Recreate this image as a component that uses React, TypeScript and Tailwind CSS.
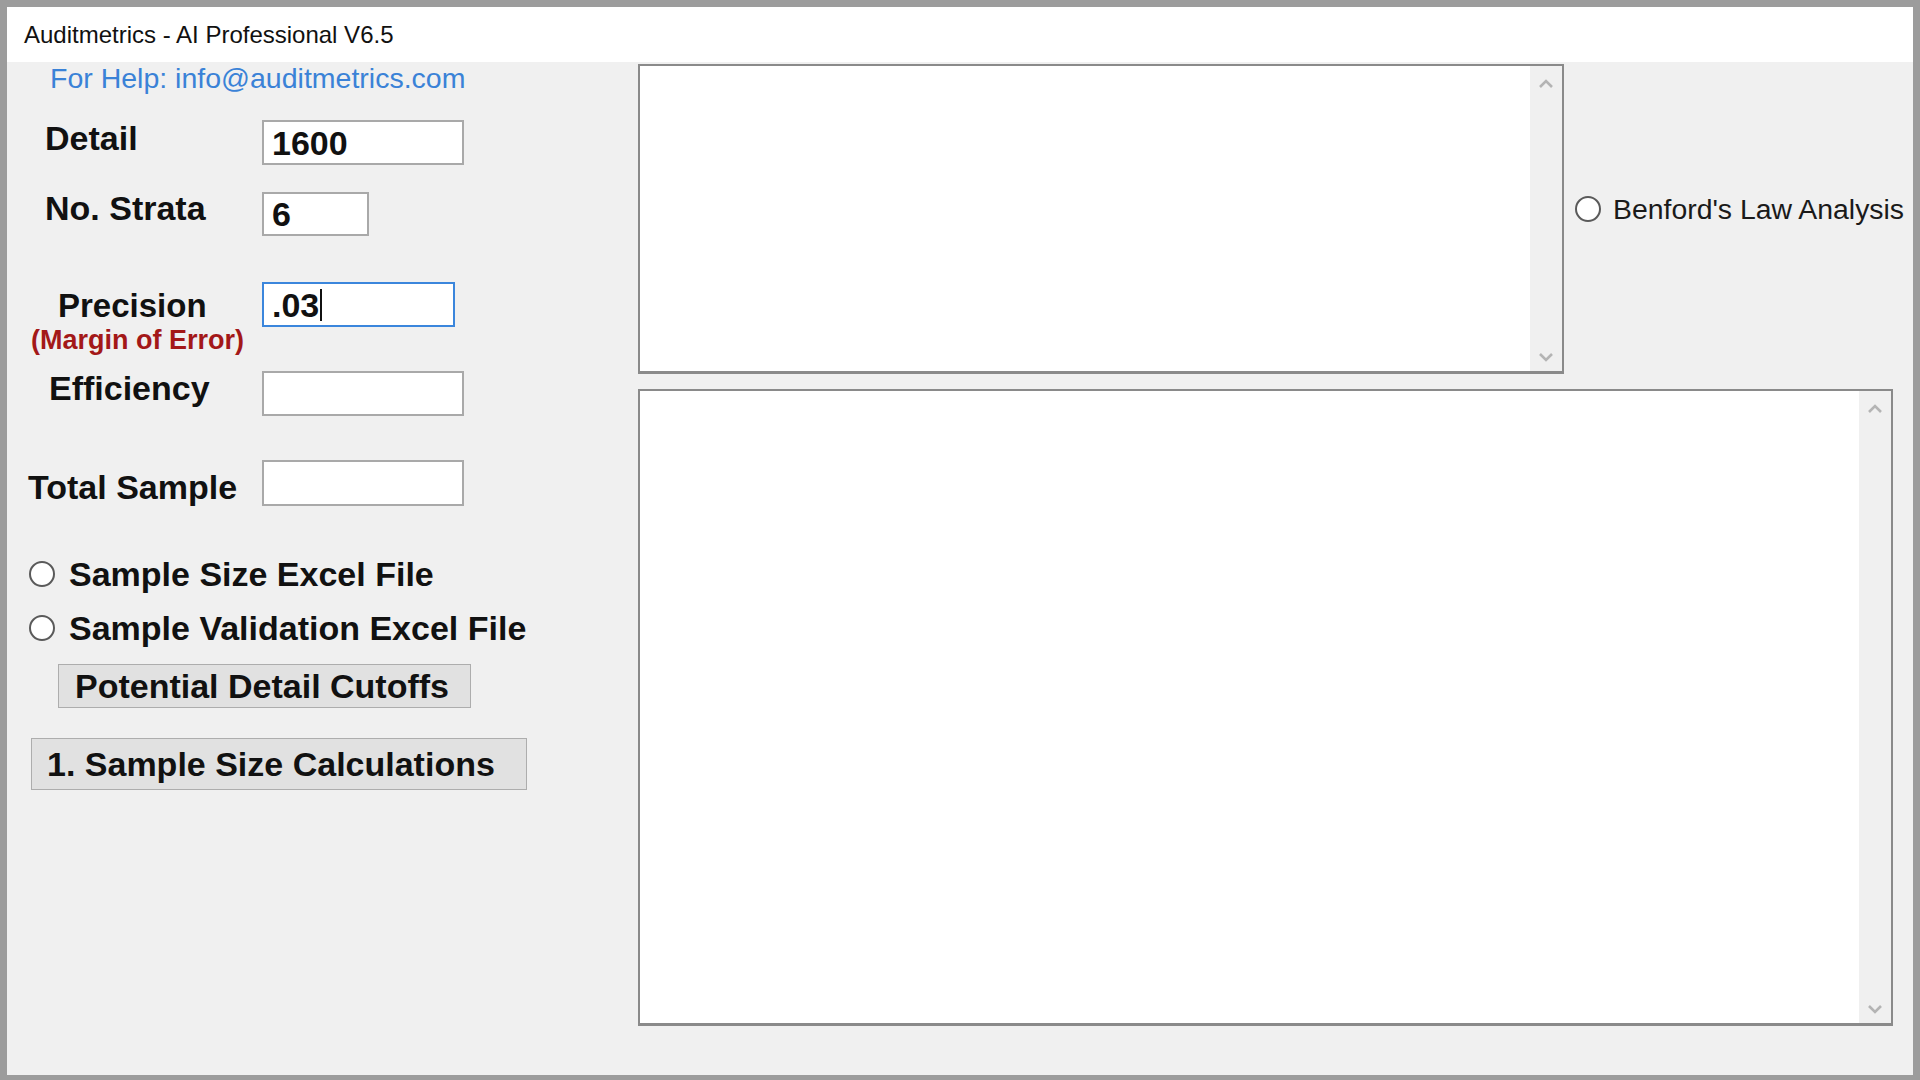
const font = "font-['Liberation_Sans',Arial,sans-serif]";

const Radio = ({ label }: { label: string }) => (
  <div className="flex items-center gap-[14px]">
    <span className="w-[26px] h-[26px] rounded-full bg-white border-2 border-[#5a5a5a] shrink-0" />
    <span className="text-[34px] leading-[40px] text-[#111] font-bold">{label}</span>
  </div>
);

const Field = ({ value, w, focused = false, h = 'h-[45px]' }: { value?: string; w: string; focused?: boolean; h?: string }) => (
  <div
    className={`${w} ${h} bg-white border-2 ${focused ? 'border-[#3b86dc]' : 'border-[#a9a9a9]'} flex items-center pl-[8px] text-[34px] font-bold text-[#111] leading-none`}
  >
    {value}
    {focused && <span className="w-[2px] h-[32px] bg-[#111] ml-[1px]" />}
  </div>
);

const Chevron = ({ down = false }: { down?: boolean }) => (
  <svg width="18" height="10" viewBox="0 0 18 10">
    <polyline
      points={down ? '3,2 9,8 15,2' : '3,8 9,2 15,8'}
      fill="none"
      stroke="#b4b4b4"
      strokeWidth="2.6"
    />
  </svg>
);

const ScrollBox = ({ w, h }: { w: string; h: string }) => (
  <div className={`${w} ${h} bg-white border-2 border-[#8a8a8a] border-b-[3px] flex`}>
    <div className="flex-1" />
    <div className="w-[32px] bg-[#f0f0f0] flex flex-col items-center justify-between pt-[13px] pb-[9px]">
      <Chevron />
      <Chevron down />
    </div>
  </div>
);

export default function App() {
  return (
    <div
      className={`${font} w-[1920px] h-[1080px] bg-[#f0f0f0] border-t-[7px] border-x-[7px] border-b-[5px] border-[#9c9c9c] flex flex-col overflow-hidden`}
    >
      {/* Title bar */}
      <div className="h-[55px] bg-white flex items-center pl-[17px] text-[24px] text-[#111] shrink-0">
        Auditmetrics - AI Professional V6.5
      </div>

      <div className="flex-1 flex">
        {/* Left form */}
        <div className="w-[631px] shrink-0 flex flex-col">
          <div className="h-[33px] pl-[43px] text-[28.5px] leading-[33px] text-[#3a82d7]">
            For Help: info@auditmetrics.com
          </div>

          <div className="mt-[25px] h-[45px] flex items-center">
            <div className="w-[255px] pl-[38px] mb-[10px] text-[34px] leading-[40px] font-bold text-[#111]">Detail</div>
            <Field value="1600" w="w-[202px]" />
          </div>

          <div className="mt-[27px] h-[44px] flex items-center">
            <div className="w-[255px] pl-[38px] mb-[12px] text-[34px] leading-[40px] font-bold text-[#111]">No. Strata</div>
            <Field value="6" w="w-[107px]" h="h-[44px]" />
          </div>

          <div className="mt-[46px] flex items-start">
            <div className="w-[255px] flex flex-col">
              <div className="pl-[51px] mt-[4px] text-[33px] leading-[40px] font-bold text-[#111]">Precision</div>
              <div className="pl-[24px] text-[27px] leading-[28px] font-bold text-[#a31818]">(Margin of Error)</div>
            </div>
            <Field value=".03" w="w-[193px]" focused />
          </div>

          <div className="mt-[17px] h-[45px] flex items-center">
            <div className="w-[255px] pl-[42px] mb-[11px] text-[34px] leading-[40px] font-bold text-[#111]">Efficiency</div>
            <Field w="w-[202px]" />
          </div>

          <div className="mt-[44px] h-[46px] flex items-center">
            <div className="w-[255px] pl-[21px] mt-[8px] text-[34px] leading-[40px] font-bold text-[#111]">Total Sample</div>
            <Field w="w-[202px]" h="h-[46px]" />
          </div>

          <div className="mt-[48px] pl-[22px]">
            <Radio label="Sample Size Excel File" />
          </div>
          <div className="mt-[14px] pl-[22px]">
            <Radio label="Sample Validation Excel File" />
          </div>

          <button className="mt-[16px] ml-[51px] w-[413px] h-[44px] bg-[#e1e1e1] border border-[#adadad] text-left pl-[16px] text-[34px] leading-none font-bold text-[#111]">
            Potential Detail Cutoffs
          </button>
          <button className="mt-[30px] ml-[24px] w-[496px] h-[52px] bg-[#e1e1e1] border border-[#adadad] text-left pl-[15px] text-[34px] leading-none font-bold text-[#111]">
            1. Sample Size Calculations
          </button>
        </div>

        {/* Right output area */}
        <div className="flex flex-col pt-[2px]">
          <div className="flex items-start">
            <ScrollBox w="w-[926px]" h="h-[310px]" />
            <div className="ml-[11px] mt-[125px]">
              <div className="flex items-center gap-[12px]">
                <span className="w-[26px] h-[26px] rounded-full bg-white border-2 border-[#5a5a5a] shrink-0" />
                <span className="text-[28.4px] leading-[40px] text-[#1a1a1a] whitespace-nowrap">Benford's Law Analysis</span>
              </div>
            </div>
          </div>
          <div className="mt-[15px]">
            <ScrollBox w="w-[1255px]" h="h-[637px]" />
          </div>
        </div>
      </div>
    </div>
  );
}
